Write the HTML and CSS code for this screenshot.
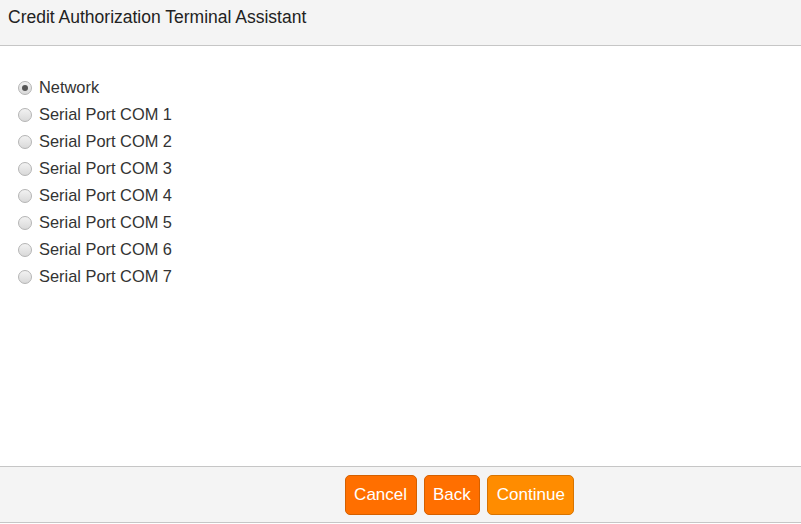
FILE: index.html
```html
<!DOCTYPE html>
<html>
<head>
<meta charset="utf-8">
<link rel="stylesheet" href="styles.css">
</head>
<body>
<div class="app">
  <header class="header">Credit Authorization Terminal Assistant</header>
  <main class="content">
    <label class="opt"><input type="radio" name="port" checked><span>Network</span></label>
    <label class="opt"><input type="radio" name="port"><span>Serial Port COM 1</span></label>
    <label class="opt"><input type="radio" name="port"><span>Serial Port COM 2</span></label>
    <label class="opt"><input type="radio" name="port"><span>Serial Port COM 3</span></label>
    <label class="opt"><input type="radio" name="port"><span>Serial Port COM 4</span></label>
    <label class="opt"><input type="radio" name="port"><span>Serial Port COM 5</span></label>
    <label class="opt"><input type="radio" name="port"><span>Serial Port COM 6</span></label>
    <label class="opt"><input type="radio" name="port"><span>Serial Port COM 7</span></label>
  </main>
  <footer class="footer">
    <button class="btn btn-dark">Cancel</button>
    <button class="btn btn-dark">Back</button>
    <button class="btn btn-light">Continue</button>
  </footer>
</div>
</body>
</html>
```
FILE: styles.css
```css
html, body {
  margin: 0;
  padding: 0;
  background: #ffffff;
}
body {
  font-family: "Liberation Sans", Arial, sans-serif;
  color: #333333;
}
.app {
  width: 801px;
  height: 524px;
  display: flex;
  flex-direction: column;
}
.header {
  height: 46px;
  box-sizing: border-box;
  padding: 7px 8px 0 8px;
  font-size: 17.5px;
  line-height: 20px;
  color: #222222;
  background: #f4f4f4;
  border-bottom: 1px solid #c6c6c6;
}
.content {
  height: 420px;
  box-sizing: border-box;
  padding: 28px 0 0 18px;
  display: flex;
  flex-direction: column;
}
.opt {
  height: 27px;
  display: flex;
  align-items: center;
  font-size: 16.4px;
  color: #333333;
}
.opt input {
  appearance: none;
  -webkit-appearance: none;
  margin: 0 7px 0 0;
  width: 14px;
  height: 14px;
  border-radius: 50%;
  border: 1px solid #b4b4b4;
  background: linear-gradient(#f2f2f2, #d9d9d9);
  box-sizing: border-box;
  position: relative;
}
.opt input:checked::after {
  content: "";
  position: absolute;
  left: 3px;
  top: 3px;
  width: 6px;
  height: 6px;
  border-radius: 50%;
  background: #555555;
}
.footer {
  height: 57px;
  box-sizing: border-box;
  background: #f4f4f4;
  border-top: 1px solid #c6c6c6;
  border-bottom: 1px solid #c6c6c6;
  display: flex;
  align-items: flex-start;
  justify-content: center;
  gap: 7px;
  padding: 8px 0 0 118px;
}
.btn {
  height: 40px;
  padding: 0 8.5px;
  font-family: "Liberation Sans", Arial, sans-serif;
  font-size: 17px;
  color: #ffffff;
  border-radius: 5px;
  border: 1px solid #d46000;
  cursor: pointer;
}
.btn-dark {
  background: #ff6f00;
}
.btn-light {
  background: #ff8c00;
  border-color: #d87400;
}
```
